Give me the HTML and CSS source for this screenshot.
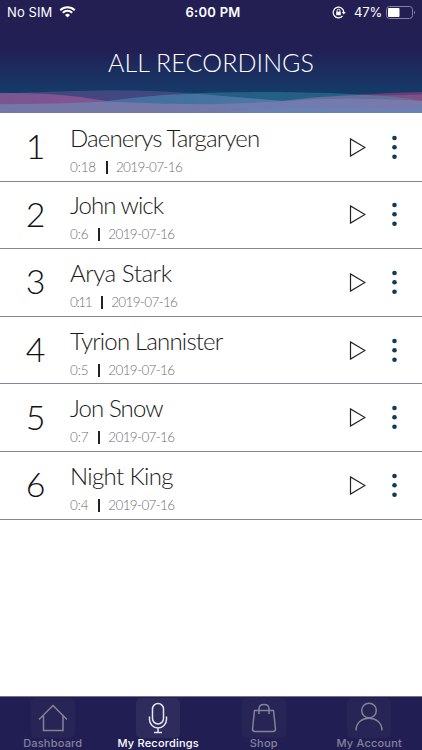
FILE: index.html
```html
<!DOCTYPE html>
<html lang="en">
<head>
<meta charset="utf-8">
<title>All Recordings</title>
<link rel="stylesheet" href="styles.css">
</head>
<body>
<header class="header">
  <svg class="waves" viewBox="0 0 422 113" aria-hidden="true">
    <defs>
      <linearGradient id="floor"><stop offset="0" stop-color="#7478a9"/><stop offset=".4" stop-color="#7478a9"/><stop offset=".65" stop-color="#6f7cb0"/><stop offset="1" stop-color="#7a79aa"/></linearGradient>
      <linearGradient id="blue"><stop offset="0" stop-color="#4a6b9e"/><stop offset=".45" stop-color="#4273a0"/><stop offset="1" stop-color="#5577a6"/></linearGradient>
      <linearGradient id="pink"><stop offset="0" stop-color="#79568f"/><stop offset="1" stop-color="#855392"/></linearGradient>
    </defs>
    <path fill="#414780" d="M0 94Q60 91 110 90.300Q160 90.500 200 94L110 102L0 97Z"/>
    <path fill="#245f86" d="M180 94Q220 91.500 280 92Q330 92.500 362 94.800L290 104L200 100Z"/>
    <path fill="url(#pink)" d="M0 93Q45 92.500 80 97Q96 99.500 110 101.500V106H0Z"/>
    <path fill="url(#blue)" d="M104 101.500Q165 93 200 94Q245 98 290 101.500V106H104Z"/>
    <path fill="#653f76" d="M358 94.800Q390 92.500 422 92V102Z"/>
    <path fill="#7f4e87" d="M375 95.500L422 94.500V102Z"/>
    <path fill="#666f9b" d="M270 102.500Q320 96 362 94.800Q395 95.500 422 101V106H270Z"/>
    <path fill="url(#floor)" d="M0 104.200Q60 104 108 101.500Q155 104 211 104.200Q260 103 300 100.300Q350 97 422 101V113H0Z"/>
    <path fill="#6883b8" opacity=".75" d="M215 113Q260 108 320 107.500Q375 108.500 422 107V113Z"/>
  </svg>
  <div class="status">
    <div class="status-side"><span class="carrier">No SIM</span>
      <svg width="17" height="12" viewBox="0 0 17 12" fill="#fff"><path d="M8.500 11.500L6 8.900A3.700 3.700 0 0 1 11 8.900Z"/><path d="M3.800 6.800A6.700 6.700 0 0 1 13.200 6.800M1.200 4.200A10.400 10.400 0 0 1 15.800 4.200" fill="none" stroke="#fff" stroke-width="2"/></svg>
    </div>
    <div class="time">6:00 PM</div>
    <div class="status-side status-right">
      <svg class="lock" width="14" height="13" viewBox="0 0 14 13" fill="none" stroke="#fff"><path d="M10.500 10A5.300 5.300 0 1 1 11.800 6.500" stroke-width="1.200"/><path d="M9.700 6H13.800L11.800 8.600Z" fill="#fff" stroke="none"/><rect x="4.200" y="5.700" width="4.600" height="3.500" fill="#fff" stroke="none"/><path d="M5.100 6V4.600A1.400 1.400 0 0 1 7.900 4.600V6"/></svg>
      <span class="percent">47%</span>
      <svg width="30" height="13" viewBox="0 0 30 13"><rect x=".5" y=".5" width="26" height="12" rx="3" fill="none" stroke="#85829f"/><rect x="2" y="2" width="11.500" height="9" rx="1" fill="#fff"/><path d="M28 4.500Q30 6.500 28 8.500Z" fill="#85829f"/></svg>
    </div>
  </div>
  <h1 class="title">ALL RECORDINGS</h1>
</header>
<main class="list">
  <article class="row"><span class="num">1</span><div class="info"><h2 class="name n1">Daenerys Targaryen</h2><p class="meta"><span class="length">0:18</span><i class="bar"></i><span>2019-07-16</span></p></div><svg class="play" viewBox="0 0 17 19"><path d="M1.500 .900V18.100L16 9.500Z"/></svg><svg class="dots" viewBox="0 0 5 25"><circle cx="2.500" cy="3" r="2.300"/><circle cx="2.500" cy="12.300" r="2.300"/><circle cx="2.500" cy="21.700" r="2.300"/></svg></article>
  <article class="row"><span class="num">2</span><div class="info"><h2 class="name n2">John wick</h2><p class="meta"><span class="length">0:6</span><i class="bar"></i><span>2019-07-16</span></p></div><svg class="play" viewBox="0 0 17 19"><path d="M1.500 .900V18.100L16 9.500Z"/></svg><svg class="dots" viewBox="0 0 5 25"><circle cx="2.500" cy="3" r="2.300"/><circle cx="2.500" cy="12.300" r="2.300"/><circle cx="2.500" cy="21.700" r="2.300"/></svg></article>
  <article class="row"><span class="num">3</span><div class="info"><h2 class="name n3">Arya Stark</h2><p class="meta"><span class="tight">0:11</span><i class="bar"></i><span>2019-07-16</span></p></div><svg class="play" viewBox="0 0 17 19"><path d="M1.500 .900V18.100L16 9.500Z"/></svg><svg class="dots" viewBox="0 0 5 25"><circle cx="2.500" cy="3" r="2.300"/><circle cx="2.500" cy="12.300" r="2.300"/><circle cx="2.500" cy="21.700" r="2.300"/></svg></article>
  <article class="row"><span class="num">4</span><div class="info"><h2 class="name n4">Tyrion Lannister</h2><p class="meta"><span class="length">0:5</span><i class="bar"></i><span>2019-07-16</span></p></div><svg class="play" viewBox="0 0 17 19"><path d="M1.500 .900V18.100L16 9.500Z"/></svg><svg class="dots" viewBox="0 0 5 25"><circle cx="2.500" cy="3" r="2.300"/><circle cx="2.500" cy="12.300" r="2.300"/><circle cx="2.500" cy="21.700" r="2.300"/></svg></article>
  <article class="row"><span class="num">5</span><div class="info"><h2 class="name n5">Jon Snow</h2><p class="meta"><span class="length">0:7</span><i class="bar"></i><span>2019-07-16</span></p></div><svg class="play" viewBox="0 0 17 19"><path d="M1.500 .900V18.100L16 9.500Z"/></svg><svg class="dots" viewBox="0 0 5 25"><circle cx="2.500" cy="3" r="2.300"/><circle cx="2.500" cy="12.300" r="2.300"/><circle cx="2.500" cy="21.700" r="2.300"/></svg></article>
  <article class="row"><span class="num">6</span><div class="info"><h2 class="name n6">Night King</h2><p class="meta"><span class="length">0:4</span><i class="bar"></i><span>2019-07-16</span></p></div><svg class="play" viewBox="0 0 17 19"><path d="M1.500 .900V18.100L16 9.500Z"/></svg><svg class="dots" viewBox="0 0 5 25"><circle cx="2.500" cy="3" r="2.300"/><circle cx="2.500" cy="12.300" r="2.300"/><circle cx="2.500" cy="21.700" r="2.300"/></svg></article>
</main>
<nav class="tabs">
  <a class="tab"><span class="tile"><svg viewBox="0 0 44 40"><path d="M8 21.500L22 7.500L36 21.500M12.500 18V32.500H32V18"/></svg></span>Dashboard</a>
  <a class="tab active"><span class="tile"><svg viewBox="0 0 44 40"><rect x="16.500" y="5.500" width="11" height="20.500" rx="5.500"/><path d="M13.500 18.500V21.500A8.500 8.500 0 0 0 30.500 21.500V18.500M22 30V34M18 34.500H26"/></svg></span>My Recordings</a>
  <a class="tab"><span class="tile"><svg viewBox="0 0 44 40"><path d="M12.500 12.500H31.500L33.500 31Q33.500 33.500 31 33.500H13Q10.500 33.500 10.500 31ZM17 16V11Q17 6.500 22 6.500Q27 6.500 27 11V16"/></svg></span>Shop</a>
  <a class="tab"><span class="tile"><svg viewBox="0 0 44 40"><circle cx="22" cy="12.500" r="7.300"/><path d="M9 32.500C9 16 35 16 35 32.500"/></svg></span>My Account</a>
</nav>
</body>
</html>
```
FILE: styles.css
```css
* { box-sizing: border-box; }
body {
  margin: 0;
  width: 422px;
  height: 750px;
  display: flex;
  flex-direction: column;
  background: #fff;
  overflow: hidden;
  font-family: Lato, sans-serif;
}
h1, h2, p { margin: 0; font-weight: 300; }
svg { display: block; flex: none; }
.header {
  position: relative;
  height: 113px;
  flex: none;
  background: linear-gradient(#231f52 0, #221f54 50px, #1c2d5f 70px, #153b69 93px);
  color: #fff;
}
.waves { position: absolute; inset: 0; width: 422px; height: 113px; }
.status {
  position: relative;
  display: flex;
  align-items: center;
  height: 24px;
  padding: 0 6px 0 7px;
  font: 13px/24px Inter, sans-serif;
}
.status-side { flex: 1; display: flex; align-items: center; gap: 7px; }
.carrier { letter-spacing: 0.1px; }
.time { font-weight: 600; letter-spacing: 0.25px; position: relative; left: 1.5px; }
.status-right { justify-content: flex-end; gap: 4px; }
.lock { margin-right: 4px; }
.percent { letter-spacing: -0.15px; }
.title {
  position: relative;
  margin-top: 21px;
  font-size: 25px;
  line-height: 34px;
  text-align: center;
  letter-spacing: 0.1px;
}
.list { flex: 1; padding-top: 1px; }
.row {
  display: flex;
  align-items: center;
  height: 67.6px;
  border-bottom: 1px solid #85849c;
  padding-right: 25px;
}
.num {
  width: 70px;
  padding: 0 0 2px 1px;
  text-align: center;
  font-size: 34px;
  line-height: 40px;
  font-weight: 300;
  color: #111;
}
.info { flex: 1; padding-top: 8px; }
.name { font-size: 24px; line-height: 30px; color: #1a1a1a; }
.n1 { letter-spacing: -0.85px; }
.n2 { letter-spacing: -0.95px; }
.n3 { letter-spacing: -0.45px; }
.n4 { letter-spacing: -0.82px; }
.n5 { letter-spacing: -0.9px; }
.n6 { letter-spacing: -0.65px; }
.meta {
  display: flex;
  align-items: center;
  height: 27px;
  padding-top: 2px;
  font-size: 13.5px;
  line-height: 25px;
  letter-spacing: -0.65px;
  color: #707070;
}
.length { letter-spacing: -0.2px; }
.tight { letter-spacing: -1.4px; }
.bar { width: 2px; height: 13px; margin: 0 8px 0 10px; background: #222; }
.play { width: 17px; height: 19px; fill: none; stroke: #222; stroke-width: 1.2; }
.dots { width: 5px; height: 25px; margin-left: 26px; fill: #103a57; }
.tabs {
  display: flex;
  height: 54px;
  flex: none;
  border-top: 1px solid #74728d;
  background: #211e54;
}
.tab {
  flex: 1;
  display: flex;
  flex-direction: column;
  align-items: center;
  font: 500 11px/13px Inter, sans-serif;
  letter-spacing: 0.2px;
  color: #858297;
  white-space: nowrap;
}
.tile {
  width: 44px;
  height: 40px;
  border-radius: 5px;
  background: #272456;
  margin-top: 1px;
  margin-bottom: -1px;
}
.tile svg { width: 44px; height: 40px; fill: none; stroke: #858297; stroke-width: 1.5; }
.active { color: #fff; }
.active .tile { background: #2e2b5d; }
.active svg { stroke: #e6e5f0; }
```
